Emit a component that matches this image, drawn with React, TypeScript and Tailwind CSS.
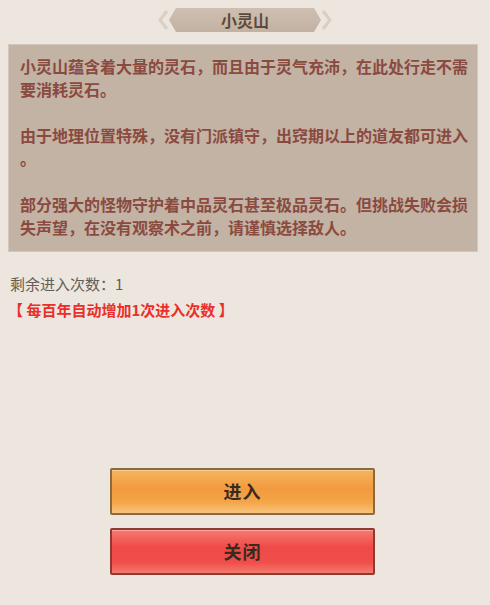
import React from "react";

const font = { fontFamily: '"Noto Sans CJK SC", "Noto Sans", sans-serif' };

function Banner() {
  return (
    <div className="relative w-[180px] h-[28px] ml-[155px] mt-[6px] flex items-center justify-center">
      <svg className="absolute inset-0" width="180" height="28" viewBox="0 0 180 28">
        <defs>
          <linearGradient id="bg" x1="0" y1="0" x2="0" y2="1">
            <stop offset="0" stopColor="#cdbfb1" />
            <stop offset="1" stopColor="#c2b2a3" />
          </linearGradient>
        </defs>
        <polygon points="14,14 21,2 159,2 166,14 159,26 21,26" fill="url(#bg)" />
        <polyline points="12,5 5,14 12,23" fill="none" stroke="#d9cfc4" strokeWidth="3" />
        <polyline points="168,5 175,14 168,23" fill="none" stroke="#d9cfc4" strokeWidth="3" />
      </svg>
      <span className="relative text-[16px] font-bold text-[#5e4a3a]">小灵山</span>
    </div>
  );
}

function Btn({ label, kind }: { label: string; kind: "orange" | "red" }) {
  const cls =
    kind === "orange"
      ? "border-[#8d6a3e] bg-[linear-gradient(180deg,#f5b45e_0%,#f39a3e_45%,#f5a549_75%,#f7c47c_100%)]"
      : "border-[#8e3a30] bg-[linear-gradient(180deg,#f67a70_0%,#ef4a48_40%,#ef4e4b_75%,#f57a6c_100%)]";
  return (
    <div
      className={`ml-[110px] w-[265px] h-[47px] rounded-[2px] border-2 ${cls} flex items-center justify-center shadow-[inset_0_1px_0_rgba(255,255,255,0.35)]`}
    >
      <span className="text-[18px] font-bold text-[#3a2a1e] tracking-[1px]">{label}</span>
    </div>
  );
}

export default function App() {
  return (
    <div className="w-[490px] h-[605px] bg-[#ece6de] overflow-hidden" style={font}>
      <Banner />
      <div className="mt-[10px] ml-[8px] w-[470px] bg-[#c2b3a5] border border-[#d3c7bb] pl-[11px] pr-[8px] pt-[10px] pb-[12px] text-[16px] leading-[23px] font-semibold text-[#8b4a40] whitespace-nowrap">
        <div>小灵山蕴含着大量的灵石，而且由于灵气充沛，在此处行走不需</div>
        <div>要消耗灵石。</div>
        <div>&nbsp;</div>
        <div>由于地理位置特殊，没有门派镇守，出窍期以上的道友都可进入</div>
        <div>。</div>
        <div>&nbsp;</div>
        <div>部分强大的怪物守护着中品灵石甚至极品灵石。但挑战失败会损</div>
        <div>失声望，在没有观察术之前，请谨慎选择敌人。</div>
      </div>
      <div className="ml-[10px] mt-[19px] text-[15px] leading-[26px] text-[#645e58]">剩余进入次数：1</div>
      <div className="ml-[8px] text-[15px] leading-[26px] font-bold text-[#ea2f2b]">【 每百年自动增加1次进入次数 】</div>
      <div className="mt-[145px] flex flex-col gap-[13px]">
        <Btn label="进入" kind="orange" />
        <Btn label="关闭" kind="red" />
      </div>
    </div>
  );
}
